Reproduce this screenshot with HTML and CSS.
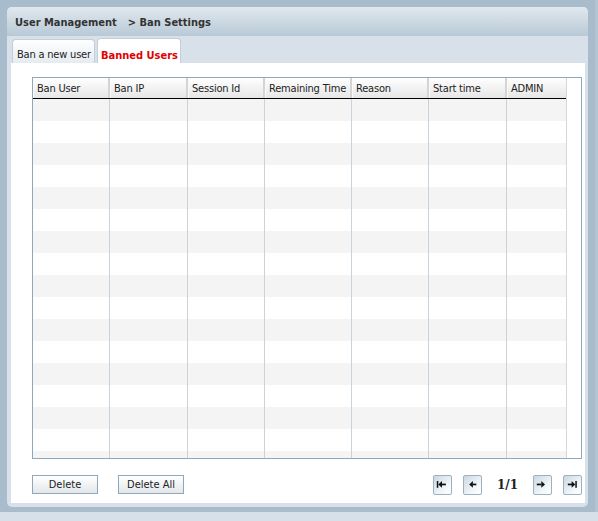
FILE: index.html
```html
<!DOCTYPE html>
<html>
<head>
<meta charset="utf-8">
<link rel="stylesheet" href="styles.css">
</head>
<body>
<div class="panel">
  <div class="header"><span>User Management</span><span class="crumb">&gt; Ban Settings</span></div>
  <div class="tabs">
    <div class="tab">Ban a new user</div>
    <div class="tab active">Banned Users</div>
  </div>
  <div class="content">
    <div class="grid">
      <div class="grid-main">
        <div class="grid-head">
          <div class="hcell">Ban User</div>
          <div class="hcell">Ban IP</div>
          <div class="hcell">Session Id</div>
          <div class="hcell">Remaining Time</div>
          <div class="hcell">Reason</div>
          <div class="hcell">Start time</div>
          <div class="hcell last">ADMIN</div>
        </div>
        <div class="grid-body">
          <div class="row"><div></div><div></div><div></div><div></div><div></div><div></div><div></div></div>
          <div class="row"><div></div><div></div><div></div><div></div><div></div><div></div><div></div></div>
          <div class="row"><div></div><div></div><div></div><div></div><div></div><div></div><div></div></div>
          <div class="row"><div></div><div></div><div></div><div></div><div></div><div></div><div></div></div>
          <div class="row"><div></div><div></div><div></div><div></div><div></div><div></div><div></div></div>
          <div class="row"><div></div><div></div><div></div><div></div><div></div><div></div><div></div></div>
          <div class="row"><div></div><div></div><div></div><div></div><div></div><div></div><div></div></div>
          <div class="row"><div></div><div></div><div></div><div></div><div></div><div></div><div></div></div>
          <div class="row"><div></div><div></div><div></div><div></div><div></div><div></div><div></div></div>
          <div class="row"><div></div><div></div><div></div><div></div><div></div><div></div><div></div></div>
          <div class="row"><div></div><div></div><div></div><div></div><div></div><div></div><div></div></div>
          <div class="row"><div></div><div></div><div></div><div></div><div></div><div></div><div></div></div>
          <div class="row"><div></div><div></div><div></div><div></div><div></div><div></div><div></div></div>
          <div class="row"><div></div><div></div><div></div><div></div><div></div><div></div><div></div></div>
          <div class="row"><div></div><div></div><div></div><div></div><div></div><div></div><div></div></div>
          <div class="row"><div></div><div></div><div></div><div></div><div></div><div></div><div></div></div>
          <div class="row"><div></div><div></div><div></div><div></div><div></div><div></div><div></div></div>
        </div>
      </div>
      <div class="scrollbar"></div>
    </div>
    <div class="actions">
      <button class="btn">Delete</button>
      <button class="btn">Delete All</button>
      <div class="pager">
        <button class="pbtn"><svg class="picon" width="17" height="18" viewBox="0 0 17 18"><rect x="2.8" y="5" width="1.5" height="6.8" fill="#111"/><path d="M4.3 8.4 L8 5.1 L8 11.7 Z" fill="#111"/><rect x="7.6" y="7.6" width="4.3" height="1.7" fill="#111"/></svg></button>
        <button class="pbtn gap"><svg class="picon" width="17" height="18" viewBox="0 0 17 18"><path d="M5.2 8.4 L8.9 5.1 L8.9 11.7 Z" fill="#111"/><rect x="8.5" y="7.6" width="3.8" height="1.7" fill="#111"/></svg></button>
        <span class="pageinfo">1/1</span>
        <button class="pbtn"><svg class="picon" width="17" height="18" viewBox="0 0 17 18"><rect x="2.8" y="7.6" width="4.6" height="1.7" fill="#111"/><path d="M11 8.4 L7.3 5.1 L7.3 11.7 Z" fill="#111"/></svg></button>
        <button class="pbtn gap"><svg class="picon" width="17" height="18" viewBox="0 0 17 18"><rect x="3.8" y="7.6" width="4.2" height="1.7" fill="#111"/><path d="M11.3 8.4 L7.6 5.1 L7.6 11.7 Z" fill="#111"/><rect x="11.3" y="5" width="1.5" height="6.8" fill="#111"/></svg></button>
      </div>
    </div>
  </div>
</div>
<div class="band"></div>
</body>
</html>
```
FILE: styles.css
```css
html, body {
  margin: 0;
  padding: 0;
}
body {
  width: 598px;
  height: 521px;
  background: linear-gradient(to right, #a9bccb 595px, #b4c5d2 595px);
  font-family: "DejaVu Sans Condensed", "DejaVu Sans", sans-serif;
  font-size: 11px;
  color: #1e1e1e;
  display: flex;
  flex-direction: column;
  overflow: hidden;
}
.panel {
  margin: 7px 10px 0 7px;
  height: 500px;
  flex: none;
  border-radius: 5px;
  background: #d8e1e9;
  display: flex;
  flex-direction: column;
  overflow: hidden;
}
.header {
  height: 29px;
  flex: none;
  background: linear-gradient(#e0e8ee, #b8c9d6);
  padding-left: 8px;
  display: flex;
  align-items: center;
  font-weight: bold;
  color: #333;
  padding-top: 1px;
  box-sizing: border-box;
}
.crumb {
  margin-left: 11px;
}
.tabs {
  height: 27px;
  flex: none;
  display: flex;
  align-items: flex-end;
  padding-left: 5px;
  gap: 2px;
}
.tab {
  width: 83px;
  height: 24px;
  box-sizing: border-box;
  border: 1px solid #c3ced8;
  border-bottom: none;
  border-radius: 4px 4px 0 0;
  background: linear-gradient(#ffffff, #e6ebf0);
  padding: 8px 0 0 4px;
  color: #222;
  white-space: nowrap;
  letter-spacing: -0.2px;
}
.tab.active {
  width: 84px;
  height: 26px;
  background: #fff;
  color: #e10000;
  font-weight: bold;
  padding: 10px 0 0 3px;
  margin-bottom: -1px;
  letter-spacing: 0;
}
.content {
  flex: 1;
  background: #fff;
  margin: 0 3px 4px 4px;
  padding: 14px 3px 0 21px;
  display: flex;
  flex-direction: column;
}
.grid {
  height: 382px;
  flex: none;
  box-sizing: border-box;
  border: 1px solid #8fa8bc;
  display: flex;
}
.grid-main {
  width: 533px;
  display: flex;
  flex-direction: column;
}
.grid-head {
  height: 21px;
  flex: none;
  box-sizing: border-box;
  display: grid;
  grid-template-columns: 77px 78px 77px 87px 77px 78px 59px;
  border-bottom: 1px solid #000;
  background: linear-gradient(#ffffff, #e6e6e6);
}
.hcell {
  box-sizing: border-box;
  border-right: 2px solid #d4d4d4;
  border-left: 1px solid #fafafa;
  padding: 4px 0 0 3px;
  white-space: nowrap;
  overflow: hidden;
  color: #222;
  letter-spacing: -0.2px;
}
.hcell.last {
  border-right: none;
}
.grid-body {
  flex: 1;
  overflow: hidden;
}
.row {
  height: 22px;
  display: grid;
  grid-template-columns: 77px 78px 77px 87px 77px 78px 59px;
}
.row:nth-child(odd) {
  background: #f4f4f4;
}
.row > div {
  border-right: 1px solid #c8d3dc;
}
.row > div:last-child {
  border-right: none;
}
.scrollbar {
  flex: 1;
  border-left: 1px solid #d6d6d6;
  background: #fff;
}
.actions {
  margin-top: 16px;
  display: flex;
  align-items: flex-start;
  gap: 20px;
}
.btn {
  width: 66px;
  height: 19px;
  box-sizing: border-box;
  border: 1px solid #8fa7bb;
  background: linear-gradient(#ffffff, #e2e7eb);
  font-family: inherit;
  font-size: 11px;
  color: #222;
  padding: 0;
  margin: 0;
}
.pager {
  margin-left: auto;
  display: flex;
  align-items: center;
}
.pbtn {
  width: 19px;
  height: 20px;
  box-sizing: border-box;
  border: 1px solid #9cb0be;
  border-radius: 2px;
  background: linear-gradient(135deg, #c9d8e3, #f4f8fa 70%, #ffffff);
  padding: 0;
  margin: 0;
  display: block;
}
.picon {
  display: block;
}
.pbtn.gap {
  margin-left: 11px;
}
.pageinfo {
  width: 51px;
  text-align: center;
  font-weight: bold;
  font-size: 12px;
  font-family: "DejaVu Serif", serif;
  color: #222;
}
.band {
  margin-top: 5px;
  flex: 1;
  background: #d7e0e8;
}
```
